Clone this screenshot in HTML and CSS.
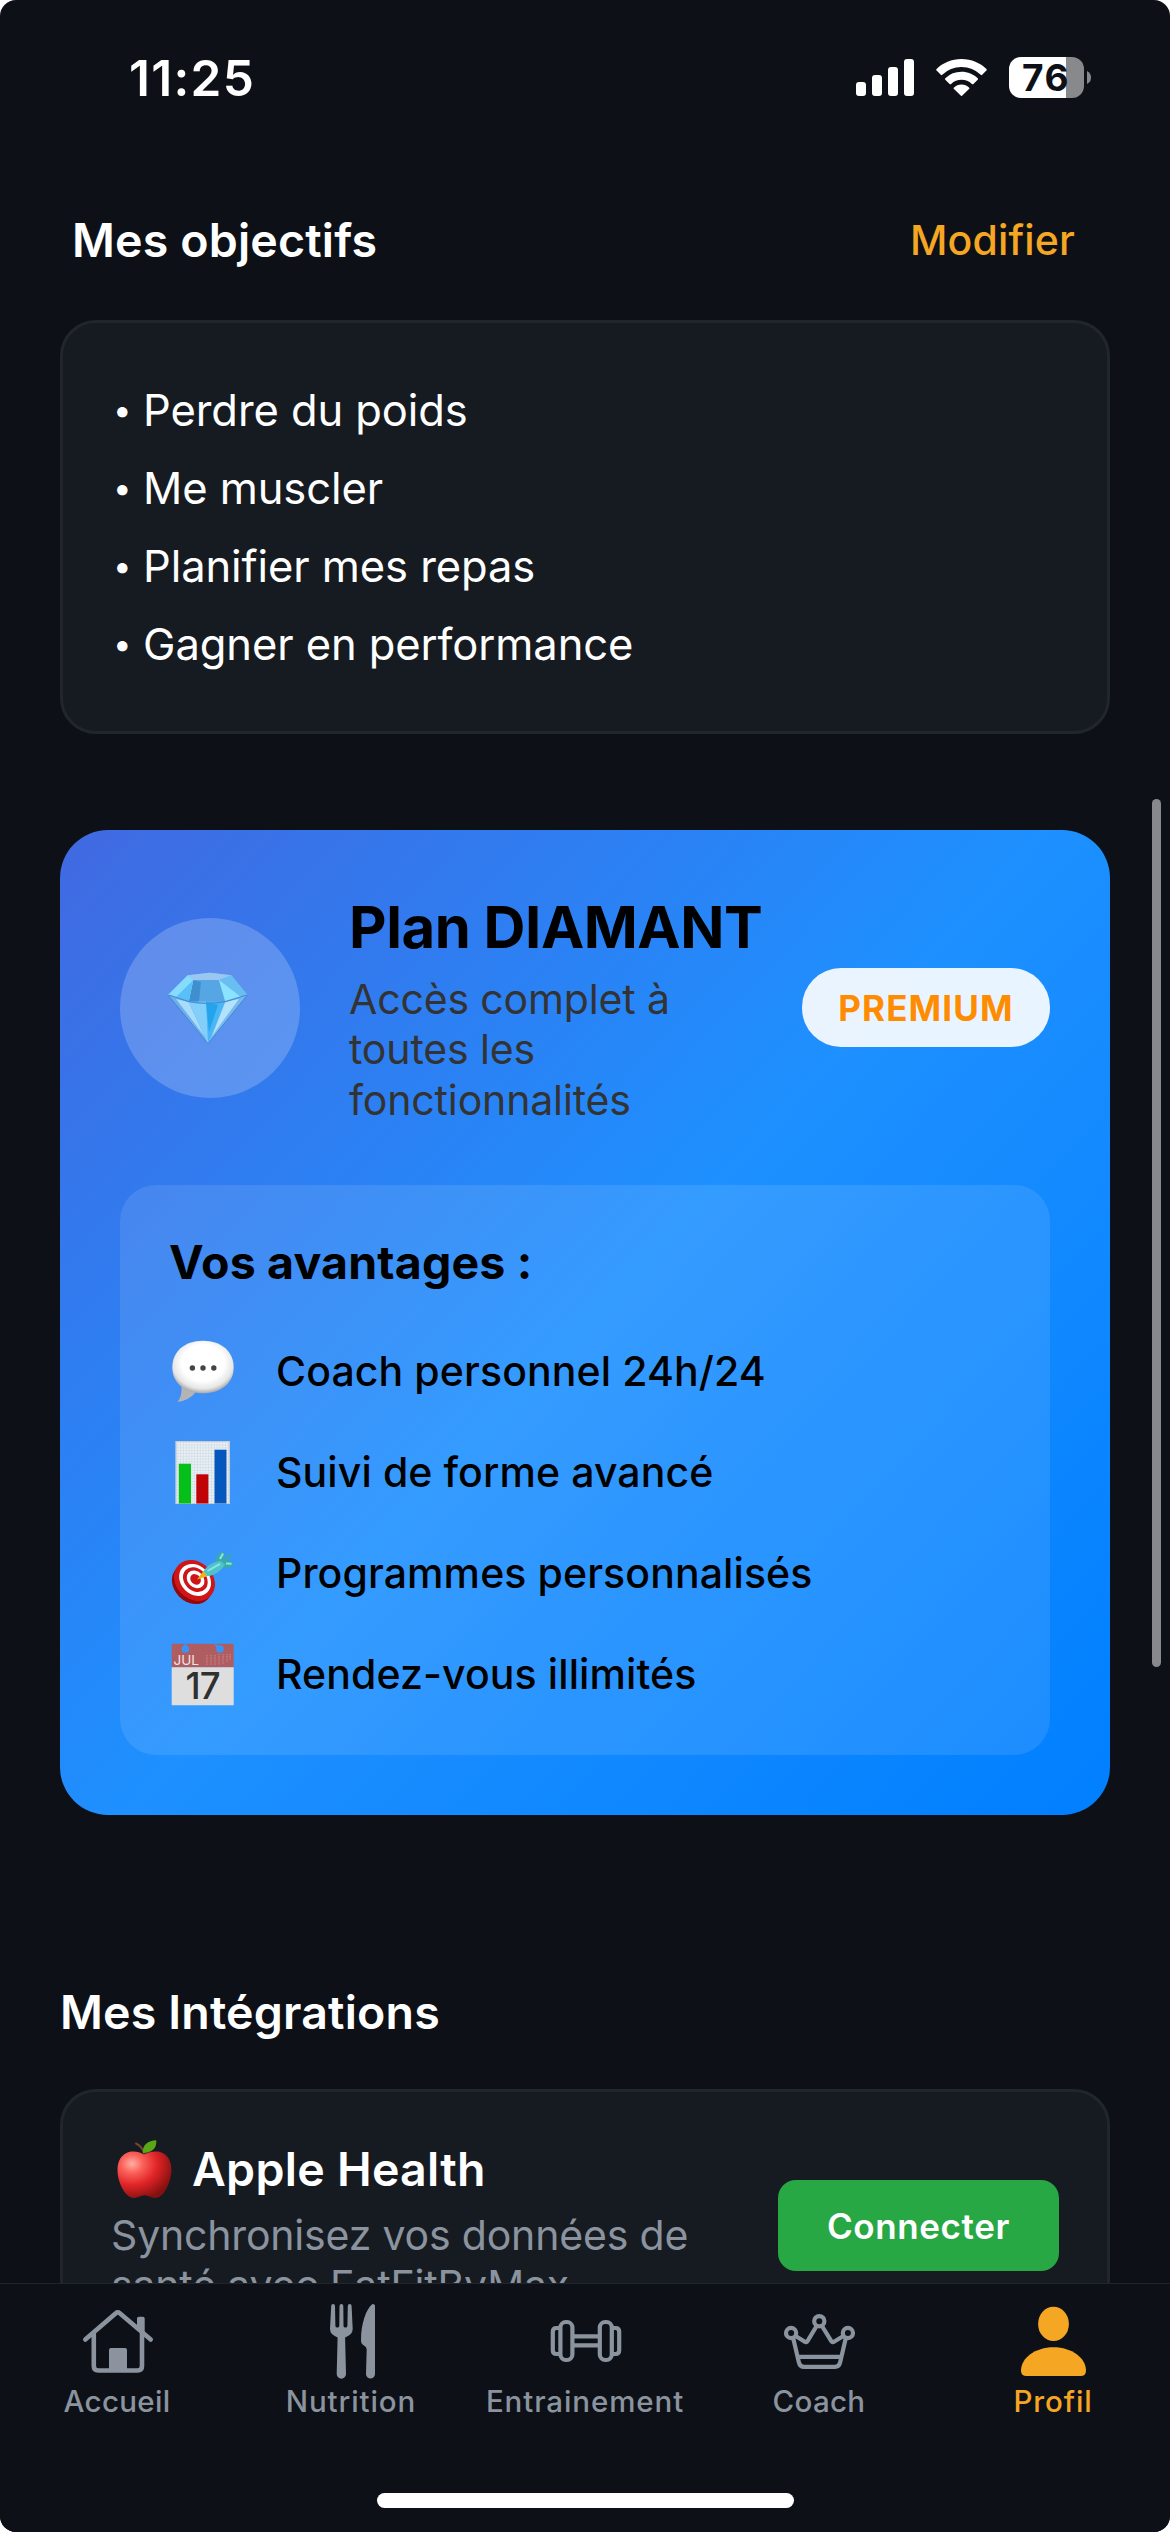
FILE: index.html
```html
<!DOCTYPE html>
<html lang="fr">
<head>
<meta charset="utf-8">
<title>Profil</title>
<link rel="stylesheet" href="styles.css">
</head>
<body>
<div class="screen">
  <header class="status">
    <span class="time">11:25</span>
    <div class="status-icons">
      <svg width="58" height="37" viewBox="0 0 58 37" fill="#fff"><rect y="23" width="10" height="14" rx="3"/><rect x="16" y="16" width="10" height="21" rx="3"/><rect x="32" y="8" width="10" height="29" rx="3"/><rect x="48" width="10" height="37" rx="3"/></svg>
      <svg class="wifi" width="51" height="37" viewBox="0 0 51 37" fill="#fff"><path d="M25.5 0C35.400 0 44.200 3.900 50.400 10a1 1 0 0 1 0 1.500l-4.200 4.200a1 1 0 0 1-1.500 0A27.600 27.600 0 0 0 25.500 8 27.600 27.600 0 0 0 6.300 15.700a1 1 0 0 1-1.500 0L.6 11.500a1 1 0 0 1 0-1.500C6.800 3.900 15.600 0 25.500 0Z"/><path d="M25.500 12.800c6.300 0 12 2.500 16.200 6.400a1 1 0 0 1 0 1.500l-4.300 4.200a1 1 0 0 1-1.500 0 15.200 15.200 0 0 0-20.800 0 1 1 0 0 1-1.500 0l-4.300-4.200a1 1 0 0 1 0-1.500 23.700 23.700 0 0 1 16.200-6.400Z"/><path d="M25.500 25.600c2.900 0 5.500 1.100 7.500 2.800a1 1 0 0 1 0 1.500l-6.700 6.700a1.100 1.100 0 0 1-1.600 0L18 29.900a1 1 0 0 1 0-1.500c2-1.700 4.600-2.800 7.500-2.800Z"/></svg>
      <div class="battery"><span class="level">76</span><svg width="4" height="13" viewBox="0 0 4 13"><path d="M0 0Q4 2 4 6.500T0 13Z" fill="#88898c"/></svg></div>
    </div>
  </header>

  <main class="content">
    <div class="section-head">
      <h2 class="heading">Mes objectifs</h2>
      <a class="edit">Modifier</a>
    </div>
    <ul class="card goals">
      <li><span class="bullet">•</span>Perdre du poids</li>
      <li><span class="bullet">•</span>Me muscler</li>
      <li><span class="bullet">•</span>Planifier mes repas</li>
      <li><span class="bullet">•</span>Gagner en performance</li>
    </ul>

    <section class="plan">
      <div class="plan-head">
        <div class="gem">
          <svg width="84" height="76" viewBox="0 0 84 76">
            <path d="M0 25 19.700 5.300 41.800 2.700 63.400 5.300 79.400 25 40 73.700Z" fill="#62c3f8"/>
            <path d="M19.700 5.300 41.800 2.700 63.400 5.300 51 10H25.300Z" fill="#9bc6f2"/>
            <path d="M25.300 10H51l6.400 21.700H20.700Z" fill="#55a6e2"/>
            <path d="M25.300 10 33 12 31 31.700H20.700Z" fill="#3f8fcf"/>
            <path d="M19.700 5.300 25.300 10 20.700 31.700 0 25Z" fill="#87dcfb"/>
            <path d="M25.300 10 8 27 20.700 31.700Z" fill="#57c0f7"/>
            <path d="M63.400 5.300 51 10l6.400 21.700L79.400 25Z" fill="#68bdf1"/>
            <path d="M51 10 73 27 57.400 31.700Z" fill="#8ce3ff"/>
            <path d="M0 25 20.700 31.700 40 73.700Z" fill="#70aee9"/>
            <path d="M8 29 20.700 31.700 37 67Z" fill="#a9dcfb"/>
            <path d="M20.700 31.700H57.400L40 73.700Z" fill="#4bb6f5"/>
            <path d="M20.700 31.700H38L40 73.700Z" fill="#83cffa"/>
            <path d="M38 32 50 35 41 62Z" fill="#23a5ee"/>
            <path d="M79.400 25 57.400 31.700 40 73.700Z" fill="#77b9ee"/>
            <path d="M71 29 57.400 31.700 44 66Z" fill="#b5e2fb"/>
            <path d="M0 25 40 73.700 79.400 25" fill="none" stroke="#3f84d4" stroke-width="1"/>
            <path d="M1 25 20.700 31.700Q40 35 57.400 31.700L79 25" fill="none" stroke="#3f90d8" stroke-width="1.300"/>
          </svg>
        </div>
        <div class="plan-info">
          <h3 class="plan-name">Plan DIAMANT</h3>
          <p class="plan-desc">Accès complet à toutes les fonctionnalités</p>
        </div>
        <span class="badge">PREMIUM</span>
      </div>
      <div class="perks">
        <h4 class="perks-title">Vos avantages :</h4>
        <div class="perk">
          <svg width="66" height="66" viewBox="0 0 66 66">
            <defs><radialGradient id="bubble" cx=".5" cy=".42" r=".58"><stop offset=".6" stop-color="#fff"/><stop offset=".85" stop-color="#e6e6e6"/><stop offset="1" stop-color="#a9a9ab"/></radialGradient></defs>
            <path d="M12.500 47Q13.500 58 8.500 64 20 62.500 27 54Z" fill="#b4b4b6"/>
            <path d="M34 2.700C53 2.700 64.700 14 64.700 29.500S52 55.300 34 55.300 3.300 45 3.300 29.500 15 2.700 34 2.700Z" fill="url(#bubble)"/>
            <g fill="#444"><circle cx="23.400" cy="30" r="2.700"/><circle cx="34" cy="30" r="2.700"/><circle cx="44.800" cy="30" r="2.700"/></g>
          </svg>
          <span>Coach personnel 24h/24</span>
        </div>
        <div class="perk">
          <svg width="66" height="66" viewBox="0 0 66 66">
            <defs><pattern id="grid" width="2.800" height="2.800" patternUnits="userSpaceOnUse"><path d="M0 0H2.800M0 0V2.800" stroke="#c3d3df" stroke-width=".9"/></pattern></defs>
            <rect x="6.700" y="2" width="54" height="63" fill="#eaf0f4"/><rect x="6.700" y="2" width="54" height="63" fill="url(#grid)"/>
            <rect x="7.200" y="2.500" width="53" height="62" fill="none" stroke="#c9cdd1"/>
            <rect x="9.800" y="24.700" width="12.200" height="39.800" fill="#05c018"/><rect x="27.300" y="35.300" width="12.100" height="29.200" fill="#c00306"/><rect x="45.500" y="10.700" width="12" height="53.800" fill="#0458bd"/>
          </svg>
          <span>Suivi de forme avancé</span>
        </div>
        <div class="perk">
          <svg width="66" height="66" viewBox="0 0 66 66">
            <g transform="rotate(45 23 44)"><ellipse cx="23" cy="44" rx="22" ry="18" fill="#94080c"/></g>
            <g transform="translate(25.500 40.500) rotate(45)">
              <ellipse rx="22.300" ry="18.500" fill="#cf1518"/>
              <ellipse cy="-.8" rx="17.500" ry="14.300" fill="#fff"/>
              <ellipse cy="-1.200" rx="13.600" ry="11" fill="#cf1518"/>
              <ellipse cy="-1.500" rx="9.800" ry="7.900" fill="#fff"/>
              <ellipse cy="-1.500" rx="5.800" ry="4.800" fill="#cf1518"/>
            </g>
            <path d="M28 39.500 34.500 31 39 36Z" fill="#e9b613"/>
            <path d="M47 24C46 17.500 49 12.500 54 11.300 56 14 56 17.500 54.500 20.500L60.300 12.800C63 15 60.500 18.500 57.500 21.500 60.500 20.200 64 21.500 64.800 24.800 61 28.500 55.500 29 51 27Z" fill="#3aa9ab"/>
            <path d="M34.500 31.500C37 26.500 43 22 51.500 21L56 24.500C52 31 46 35.500 38.500 36Z" fill="#4fc3ca"/>
            <path d="M38.500 31 51 23.800M51 19 54 13.500M57 23.500 62.500 23.800" stroke="#8fe3e4" stroke-width="2"/>
          </svg>
          <span>Programmes personnalisés</span>
        </div>
        <div class="perk">
          <svg width="66" height="66" viewBox="0 0 66 66">
            <path d="M2.700 2.700H64.700V26.300H2.700Z" fill="#af5d60"/><path d="M2.700 26.300H64.700V64.300H2.700Z" fill="#dedede"/>
            <g fill="#3595fd"><circle cx="16.300" cy="8" r="3.800"/><circle cx="51" cy="8" r="3.800"/></g><path d="M16.300 8V2M50 8 46 2.500" stroke="#3595fd" stroke-width="1.800"/>
            <path d="M38 14V24M42 14V24M46 14V24M50 13V24M54 13V23M58 13V21M61 13V19" stroke="#c58385" stroke-width="1.300" stroke-dasharray="1.300 .8"/>
            <text class="cal-month" x="4.500" y="23.500">JUL</text><text class="cal-day" x="33.500" y="58.300">17</text>
          </svg>
          <span>Rendez-vous illimités</span>
        </div>
      </div>
    </section>

    <h2 class="heading integrations">Mes Intégrations</h2>
    <section class="card service">
      <div class="service-info">
        <h3 class="service-name">
          <svg width="66" height="60" viewBox="0 0 66 60">
            <defs><radialGradient id="apple" cx=".27" cy=".26" r=".8"><stop offset="0" stop-color="#ffb0a5"/><stop offset=".25" stop-color="#fb6259"/><stop offset=".58" stop-color="#e12427"/><stop offset="1" stop-color="#84100f"/></radialGradient></defs>
            <path d="M33 15.500C39 12.500 46 11.500 51.500 14 58 17 60.400 24 60.400 31 60.400 43 53 59 44 59 40 59 37 56.300 33.500 56.300S27 59 23 59C14 59 6.500 43 6.500 31 6.500 24 9 17 15.500 14 21 11.500 28 12.500 33 15.500Z" fill="url(#apple)"/>
            <path d="M33 14C31.500 9 28.500 6 25 4.500" fill="none" stroke="#75452d" stroke-width="2" stroke-linecap="round"/>
            <path d="M32 14C31 6 37 1.500 45.300 1.300 46 9 41 14 32 14Z" fill="#58a915"/>
          </svg>
          <span>Apple Health</span>
        </h3>
        <p class="service-desc">Synchronisez vos données de santé avec EatFitByMax</p>
      </div>
      <button class="connect">Connecter</button>
    </section>
  </main>

  <footer class="tabbar">
    <nav class="tabs">
      <a class="tab"><svg width="80" height="81" viewBox="0 0 80 81" fill="none" stroke="currentColor" stroke-width="4.600" stroke-linecap="round" stroke-linejoin="round"><path d="M8.300 37.600 38.800 11.200Q40.800 9.500 42.800 11.200L73.700 37.600"/><path d="M16.800 31.500V64Q16.800 68.500 21.300 68.500H60.500Q65 68.500 65 64V31.500"/><path d="M32 69V48Q32 46 34 46H48Q50 46 50 48V69ZM60 26V16.500Q60 14.700 61.800 14.700H65.900Q67.700 14.700 67.700 16.500V33Z" fill="currentColor" stroke="none"/></svg><span>Accueil</span></a>
      <a class="tab"><svg width="80" height="81" viewBox="0 0 80 81" fill="currentColor"><path d="M20.200 4 19 27Q19 32.500 26.600 35.500L25.700 72A4.650 4.650 0 0 0 35 72L34.100 35.500Q41.700 32.500 41.700 27L40.600 4A1.900 1.900 0 0 0 36.800 4L36.400 24Q36.300 25.600 34.400 25.600T32.500 24L32.300 4A1.900 1.900 0 0 0 28.500 4L28.300 24Q28.200 25.600 26.300 25.600T24.400 24L24 4A1.900 1.900 0 0 0 20.200 4ZM64 3.500Q63.500 1.800 61.500 2C55 7 50 22 50 38Q49.800 42 53 43.500 55.700 45 55.700 47.500L55 72A4.500 4.500 0 0 0 64 72Z"/></svg><span class="wide">Nutrition</span></a>
      <a class="tab"><svg width="80" height="81" viewBox="0 0 80 81" fill="none" stroke="currentColor" stroke-width="4.200"><rect x="15.400" y="20" width="12" height="38" rx="5.500"/><rect x="54.800" y="20" width="12" height="38" rx="5.500"/><path d="M15 26H11.500Q7.800 26 7.800 29.700V48.300Q7.800 52 11.500 52H15M67 26H70.500Q74.200 26 74.200 29.700V48.300Q74.200 52 70.500 52H67M29 34.400H53M29 43.400H53"/></svg><span class="wide">Entrainement</span></a>
      <a class="tab"><svg width="80" height="81" viewBox="0 0 80 81" fill="none" stroke="currentColor" stroke-width="4.200" stroke-linejoin="round"><circle cx="40.300" cy="19.200" r="5.100"/><circle cx="12.100" cy="31" r="5.100"/><circle cx="68.900" cy="31" r="5.100"/><path d="M37.300 24.500 28.500 39.200Q27.500 40.800 25.800 39.700L16.600 34M43.300 24.500 52.300 39.200Q53.300 40.800 55 39.700L64.400 34M14.300 36.500 19.900 60.500Q21 64.900 25 64.900H56Q60 64.900 61.100 60.500L66.700 36.500M18.500 54.900H62.500"/></svg><span>Coach</span></a>
      <a class="tab active"><svg width="80" height="81" viewBox="0 0 80 81" fill="currentColor"><ellipse cx="40.500" cy="21.900" rx="15.400" ry="17.100"/><path d="M8 68.500C8 56 22 45.200 40.500 45.200S73 56 73 68.500Q73 74 67.500 74H13.500Q8 74 8 68.500Z"/></svg><span class="wide">Profil</span></a>
    </nav>
    <div class="home-indicator"></div>
  </footer>
  <div class="scrollbar"></div>
</div>
</body>
</html>
```

FILE: styles.css
```css
* { box-sizing: border-box; margin: 0; padding: 0; }

body {
  background: #fff;
  font-family: Inter, "Liberation Sans", sans-serif;
  color: #fff;
}

svg { display: block; flex: none; }

.screen {
  position: relative;
  display: flex;
  flex-direction: column;
  width: 1170px;
  height: 2532px;
  overflow: hidden;
  border-radius: 16px;
  background: #0d1117;
}

/* Status bar */
.status {
  display: flex;
  flex: none;
  justify-content: space-between;
  align-items: flex-start;
  height: 164px;
  padding: 48px 79px 0 129px;
}
.time { font-size: 49.5px; line-height: 60px; font-weight: 600; letter-spacing: 1.3px; }
.status-icons { display: flex; align-items: center; height: 41px; margin-top: 9px; }
.wifi { margin-left: 22px; }
.battery { display: flex; align-items: center; gap: 3px; margin-left: 22px; }
.level {
  width: 75px;
  height: 41px;
  padding-left: 13px;
  border-radius: 12px;
  background: linear-gradient(90deg, #fff 57px, #88898c 57px);
  color: #0d1117;
  font-size: 37px;
  line-height: 41px;
  font-weight: 700;
  letter-spacing: 1.5px;
}

/* Scrolling content */
.content { flex: 1; min-height: 0; overflow: hidden; padding: 48px 60px 0; }
.section-head {
  display: flex;
  justify-content: space-between;
  align-items: center;
  padding: 0 35px 0 12px;
}
.heading { font-size: 46.5px; line-height: 56px; font-weight: 600; letter-spacing: .17px; }
.edit { color: #f5a623; font-size: 41px; line-height: 50px; font-weight: 500; letter-spacing: .15px; }

.card { border: 3px solid #21262d; border-radius: 36px; background: #161b22; }
.goals { margin-top: 52px; padding: 48px 50px; list-style: none; }
.goals li {
  display: flex;
  font-size: 43.5px;
  line-height: 78px;
  letter-spacing: -.08px;
}
.bullet { width: 30px; font-size: 33px; }

/* Plan card */
.plan {
  margin-top: 96px;
  padding: 60px;
  border-radius: 48px;
  background: linear-gradient(133.17deg, #4169e1, #1e90ff 50%, #007fff);
  color: #000;
}
.plan-head { display: flex; align-items: center; height: 235px; }
.gem {
  display: flex;
  flex: none;
  align-items: center;
  justify-content: center;
  width: 180px;
  height: 180px;
  border-radius: 50%;
  background: rgba(255, 255, 255, .2);
}
.plan-info { flex: 1; min-width: 0; padding: 1px 30px 0 49px; }
.plan-name { font-size: 58px; line-height: 72px; font-weight: 700; letter-spacing: -.44px; white-space: nowrap; }
.plan-desc { margin-top: 11px; color: #333; font-size: 41px; line-height: 50.4px; letter-spacing: -.15px; }
.badge {
  flex: none;
  width: 248px;
  height: 79px;
  border-radius: 39px;
  background: rgba(255, 255, 255, .9);
  color: #ff8c00;
  font-size: 35px;
  line-height: 81px;
  font-weight: 700;
  letter-spacing: 1.12px;
  text-align: center;
}
.perks {
  height: 570px;
  margin-top: 60px;
  padding: 49px 49px 0;
  border-radius: 36px;
  background: rgba(255, 255, 255, .1);
}
.perks-title { margin-bottom: 30.5px; font-size: 46.5px; line-height: 56px; font-weight: 700; letter-spacing: .16px; }
.perk {
  display: flex;
  align-items: center;
  gap: 41px;
  height: 101px;
  font-size: 41px;
  line-height: 50px;
  font-weight: 500;
  letter-spacing: .1px;
}
.cal-month { fill: #f3e3e3; font-size: 13.5px; font-weight: 400; letter-spacing: 0; }
.cal-day { fill: #303030; font-size: 36.5px; font-weight: 500; letter-spacing: -1px; text-anchor: middle; }

/* Integrations */
.integrations { margin-top: 169px; }
.service {
  display: flex;
  align-items: center;
  height: 273px;
  margin-top: 49px;
  padding: 0 48px;
}
.service-info { flex: 1; min-width: 0; padding-right: 30px; }
.service-name {
  display: flex;
  align-items: center;
  gap: 15px;
  height: 56px;
  font-size: 46.5px;
  line-height: 56px;
  font-weight: 600;
  letter-spacing: .28px;
}
.service-desc { margin-top: 13px; color: #8b949e; font-size: 41px; line-height: 50.4px; letter-spacing: -.18px; }
.connect {
  flex: none;
  width: 281px;
  height: 91px;
  padding-top: 1px;
  border: 0;
  border-radius: 18px;
  background: #28a745;
  color: #fff;
  font: 600 35px/90px Inter, "Liberation Sans", sans-serif;
  letter-spacing: .6px;
}

/* Tab bar */
.tabbar { flex: none; height: 249px; border-top: 1px solid #21262d; background: #0d1117; }
.tabs { display: flex; padding-top: 18px; }
.tab {
  display: flex;
  flex: 1;
  flex-direction: column;
  align-items: center;
  color: #8b949e;
  font-size: 29.5px;
  line-height: 36px;
  font-weight: 500;
  letter-spacing: .3px;
}
.tab .wide { letter-spacing: .9px; }
.tab.active { color: #f5a623; }
.home-indicator { width: 417px; height: 15px; margin: 74px auto 0; border-radius: 8px; background: #fff; }

.scrollbar {
  position: absolute;
  top: 799px;
  left: 1152px;
  width: 9px;
  height: 868px;
  border-radius: 5px;
  background: #88898c;
}
```
